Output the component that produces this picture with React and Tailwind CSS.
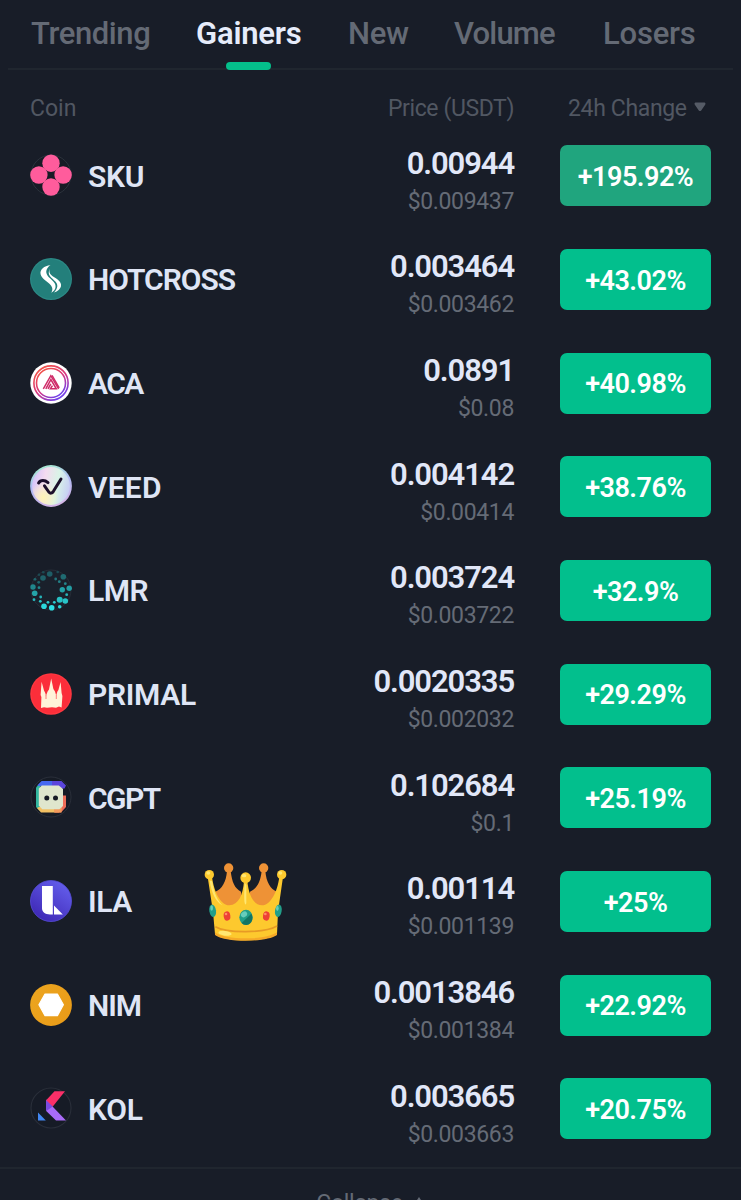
import React, { useState } from 'react';
import { clsx } from 'clsx';

const SkuIcon = () => (
  <svg viewBox="0 0 42 42" className="w-full h-full">
    <circle cx="21" cy="21" r="20" fill="#171b25" stroke="#2b323c" strokeWidth="1" />
    <g fill="#ff5c9c">
      <circle cx="21" cy="9.2" r="8.7" />
      <circle cx="8.9" cy="21" r="8.7" />
      <circle cx="33.1" cy="21" r="8.7" />
      <circle cx="21" cy="33" r="8.7" />
    </g>
  </svg>
);

const HotcrossIcon = () => (
  <svg viewBox="0 0 42 42" className="w-full h-full">
    <circle cx="21" cy="21" r="21" fill="#2b8a86" />
    <circle cx="21" cy="21" r="19.8" fill="#237f7b" />
    <path fill="#fff" d="M20.6 7C14 8 9.6 11.5 10.6 16.2C11.8 21.2 18 23.4 21 27.4C23.2 30.6 22.4 33 21 34.8C25.2 33 26.6 29 24.8 25.6C22.4 21.4 17.4 19.4 16.4 15C15.8 11.4 18.4 8.4 20.6 7Z" />
    <path fill="#fff" d="M20 10.8C17.4 16.4 23.4 18.4 27.6 21.4C33.4 26 31.8 31.4 24 34.6C28 30.4 28.2 26.8 25.6 23.8C22.4 20.2 16 17 20 10.8Z" />
  </svg>
);

const AcaIcon = () => (
  <svg viewBox="0 0 42 42" className="w-full h-full">
    <defs>
      <linearGradient id="acaRing" x1="0.2" y1="0.1" x2="0.8" y2="0.95">
        <stop offset="0" stopColor="#f0504b" />
        <stop offset="0.5" stopColor="#d8357f" />
        <stop offset="1" stopColor="#6a41f2" />
      </linearGradient>
    </defs>
    <circle cx="21" cy="21" r="20.7" fill="#fff" />
    <circle cx="21" cy="21" r="17.1" fill="none" stroke="url(#acaRing)" strokeWidth="1.6" />
    <circle cx="21" cy="21" r="14.5" fill="none" stroke="url(#acaRing)" strokeWidth="1.6" />
    <g fill="none" stroke="#cf2d69" strokeWidth="1.5">
      <path d="M13.3 26.8L20.8 13.7L28.6 26.8" />
      <path d="M15.8 26.8L20.9 17.6L26.3 26.8H20.4L22.4 23.6" />
      <path d="M18 26.8L20.8 21.8" />
      <path d="M22 13.4L29.2 25.8" />
    </g>
  </svg>
);

const VeedIcon = () => (
  <svg viewBox="0 0 42 42" className="w-full h-full">
    <defs>
      <linearGradient id="veedBase" x1="0" y1="0.4" x2="1" y2="0.6">
        <stop offset="0" stopColor="#d5c3fa" />
        <stop offset="0.3" stopColor="#f4dbf0" />
        <stop offset="0.65" stopColor="#d9f4e7" />
        <stop offset="1" stopColor="#c6ccf5" />
      </linearGradient>
      <radialGradient id="veedYellow" cx="0.3" cy="0.8" r="0.4">
        <stop offset="0" stopColor="#fff4b5" />
        <stop offset="1" stopColor="#fff4b5" stopOpacity="0" />
      </radialGradient>
      <linearGradient id="veedRim" x1="0.3" y1="0" x2="0.6" y2="1">
        <stop offset="0" stopColor="#a9eed1" />
        <stop offset="0.45" stopColor="#aeb9f2" />
        <stop offset="1" stopColor="#d8b6e8" />
      </linearGradient>
    </defs>
    <circle cx="21" cy="21" r="20.9" fill="url(#veedRim)" />
    <circle cx="21" cy="21" r="18.9" fill="url(#veedBase)" />
    <circle cx="21" cy="21" r="18.9" fill="url(#veedYellow)" />
    <g fill="none" stroke="#1c0f2b" strokeWidth="3" strokeLinecap="round" strokeLinejoin="round">
      <path d="M8.6 18C10.5 14.6 15 15 18 17.6" />
      <path d="M14.5 20.8L18.8 27Q21.2 29.6 23.4 26.3L31 14" />
    </g>
  </svg>
);

const lmrDots = [
  [19.7, 5, 2.8, '#1f5d66'], [13, 9, 2.8, '#1f6169'], [8.7, 13.3, 1.4, '#1d656c'],
  [25.7, 10, 1.4, '#23737a'], [33.3, 7.7, 2.8, '#1f6a71'], [29.3, 12.7, 1.4, '#238087'],
  [35.3, 14.7, 1.4, '#23868c'], [39.2, 19.3, 2.7, '#229da3'], [32.3, 20.7, 2.7, '#22a2a7'],
  [36.7, 25.7, 1.4, '#27b5b9'], [29.7, 30.8, 3, '#27c0c4'], [35.3, 32, 2.8, '#28c5c9'],
  [24.3, 33.3, 1.4, '#2accd0'], [18, 33.3, 1.4, '#2accd0'], [29.7, 37.7, 1.8, '#2cd4d8'],
  [21.7, 38.7, 2.8, '#2de0e4'], [14, 37.3, 2.8, '#2cd8dc'], [10.3, 32.3, 1.4, '#29c4c8'],
  [10.7, 28, 1.4, '#26b3b8'], [4, 30.7, 1.4, '#27b9bd'], [4.7, 24.3, 2.8, '#24a4a9'],
  [9, 18.7, 1.4, '#21868c'], [3, 18, 2.7, '#20868c'], [5, 10.3, 1.4, '#1e656c'],
  [13.3, 3.3, 1.3, '#1c4a53'], [9, 5.7, 1.3, '#1c4a53'], [27.7, 3, 1.3, '#1c4a53'],
];

const LmrIcon = () => (
  <svg viewBox="0 0 42 42" className="w-full h-full">
    <circle cx="21" cy="21" r="20" fill="#1a202b" stroke="#272d38" strokeWidth="1" />
    {lmrDots.map(([cx, cy, r, fill], index) => (
      <circle key={index} cx={cx} cy={cy} r={r} fill={fill} />
    ))}
  </svg>
);

const PrimalIcon = () => (
  <svg viewBox="0 0 42 42" className="w-full h-full">
    <circle cx="21" cy="21" r="20.8" fill="#ff3840" />
    <circle cx="21" cy="21" r="19.6" fill="#fb2e3a" />
    <path fill="#fff3d9" d="M11 35L11.4 24L10.6 22L11.6 8.8L14 17.4L15.2 19.8L16 22.8L17.6 18.5L19 16.6L21.2 5.4L23.4 16L25 18.4L26.2 22.6L27.4 18.4L28.4 17L30.6 9L31.6 20L32.4 23L31.6 34.4L29 33.6L26 34.8L22 34.2L17 34.8L14 34.2Z" />
    <path stroke="#fb2e3a" strokeWidth="0.6" d="M16 22V26M26.3 22V26" />
  </svg>
);

const CgptIcon = () => (
  <svg viewBox="0 0 42 42" className="w-full h-full">
    <circle cx="21" cy="21" r="20" fill="#161b25" stroke="#2a2f3a" strokeWidth="1" />
    <path fill="#33b8a0" d="M6 11.5L10.5 6.5V35.5L6 31Z" />
    <path fill="#4668f0" d="M7.2 9.5L11.6 5H24L26 10H9Z" />
    <path fill="#5b45dc" d="M22 5H31.5L36 9.5L34.5 12.5H30L27 10H22Z" />
    <path fill="#f2c063" d="M7 32L11 36.6H29V31H9Z" />
    <path fill="#ef6d58" d="M31 19.5H36V31L31 36.5H25V31Z" />
    <path fill="#f29a5b" d="M24 31H32L31.5 36.5H24Z" />
    <path fill="#dfe6cd" d="M11.8 9.4H28.8L33 13V30L29.5 33.2H12.3L8.8 29.8V12.6Z" />
    <circle cx="16.8" cy="22" r="2.5" fill="#171b24" />
    <circle cx="25.5" cy="22" r="2.5" fill="#171b24" />
  </svg>
);

const IlaIcon = () => (
  <svg viewBox="0 0 42 42" className="w-full h-full">
    <defs>
      <linearGradient id="ilaBg" x1="0.8" y1="0.1" x2="0.25" y2="0.9">
        <stop offset="0" stopColor="#625be9" />
        <stop offset="1" stopColor="#402bb8" />
      </linearGradient>
    </defs>
    <circle cx="21" cy="21" r="20.5" fill="url(#ilaBg)" stroke="#574edb" strokeWidth="0.8" />
    <path fill="#fff" d="M12 6H22.8V34.4H20C15 34.4 12 32 12 28Z" />
    <path fill="#fff" d="M24 25.4L32.8 34.4H24Z" />
  </svg>
);

const NimIcon = () => (
  <svg viewBox="0 0 42 42" className="w-full h-full">
    <defs>
      <linearGradient id="nimBg" x1="0" y1="0.2" x2="1" y2="0.8">
        <stop offset="0" stopColor="#eca51f" />
        <stop offset="1" stopColor="#e99b18" />
      </linearGradient>
    </defs>
    <circle cx="21" cy="21" r="20.9" fill="url(#nimBg)" />
    <path fill="#fff" stroke="#fff" strokeWidth="1.2" strokeLinejoin="round" d="M8.9 20.8L15 10H27.4L33.4 20.8L27.4 31.6H15Z" />
  </svg>
);

const KolIcon = () => (
  <svg viewBox="0 0 42 42" className="w-full h-full">
    <circle cx="21" cy="21" r="20" fill="#161b26" stroke="#2a2f3a" strokeWidth="1.1" />
    <path fill="#a96bf8" d="M16.2 12.5V24L26 33.5H36L23.5 20.5Z" />
    <path fill="#7a4ae0" d="M16.2 12.5V24L22.8 19.5Z" />
    <path fill="#fb2f68" d="M24.5 4.3H35L22.8 19.6L16.2 13.2Z" />
    <path fill="#4287f2" d="M8 25.6V33.5H15.8Z" />
  </svg>
);

const Crown = () => (
  <svg viewBox="0 0 330 285" className="w-[110px] h-[95px]">
    <g fill="#ee9236">
      <circle cx="116" cy="39" r="14" />
      <circle cx="221" cy="39" r="14" />
      <path d="M111 48H122C126 82 134 100 153 110L160 155H90L76 110C96 102 108 82 111 48Z" />
      <path d="M226 48H215C211 82 201 100 180 110L174 155H244L261 110C241 102 229 82 226 48Z" />
    </g>
    <g fill="#fdc92e">
      <circle cx="58" cy="59" r="14" />
      <circle cx="275" cy="59" r="14" />
      <circle cx="167" cy="68" r="16" />
      <path d="M53 66H66C72 112 92 150 118 151C146 149 159 120 162 78H172C176 120 190 149 216 151C242 150 262 112 268 66H279L264 170L261 238C230 262 103 262 75 238L69 170Z" />
    </g>
    <path fill="none" stroke="#e79a25" strokeWidth="5" d="M76 215C110 235 224 235 261 213" />
    <path fill="#f5a928" d="M75 232C103 256 230 256 261 232V240C230 263 103 263 75 240Z" />
    <g fill="#ffe772">
      <ellipse cx="55" cy="54" rx="6" ry="5" />
      <ellipse cx="162" cy="62" rx="7" ry="5" />
      <ellipse cx="271" cy="54" rx="6" ry="5" />
      <ellipse cx="105" cy="235" rx="20" ry="7" transform="rotate(8 105 235)" />
      <path d="M59 77L66 78C73 116 83 139 98 151C77 141 64 112 59 77Z" />
      <path d="M164 84L169 90V145C165 155 160 145 164 84Z" />
    </g>
    <g fill="#229e89">
      <ellipse cx="68" cy="167" rx="10" ry="19" transform="rotate(-8 68 167)" />
      <ellipse cx="265" cy="167" rx="10" ry="19" transform="rotate(8 265 167)" />
      <ellipse cx="168" cy="187" rx="20" ry="23" />
    </g>
    <g fill="#66cdbb">
      <ellipse cx="65" cy="159" rx="4" ry="8" />
      <ellipse cx="262" cy="160" rx="4" ry="8" />
      <ellipse cx="162" cy="178" rx="10" ry="8" transform="rotate(-35 162 178)" />
    </g>
    <path fill="#137463" d="M155 204L184 176C191 188 187 208 169 210C163 210 158 208 155 204Z" />
    <ellipse cx="111" cy="183" rx="10" ry="14" fill="#ed4035" transform="rotate(-8 111 183)" />
    <ellipse cx="229" cy="183" rx="10" ry="14" fill="#ed4035" transform="rotate(8 229 183)" />
    <circle cx="108" cy="177" r="4" fill="#ff8b69" />
    <circle cx="226" cy="177" r="4" fill="#ff8b69" />
  </svg>
);

const tabs = [
  { name: 'Trending', className: 'w-[165px] tracking-[-0.4px]' },
  { name: 'Gainers', className: 'w-[152px] tracking-[-0.2px]' },
  { name: 'New', className: 'w-[106px] tracking-[-0.3px]' },
  { name: 'Volume', className: 'w-[149px] tracking-[-0.8px]' },
  { name: 'Losers', className: 'tracking-[-0.2px]' },
];

const coins = [
  { symbol: 'SKU', price: '0.00944', usd: '$0.009437', change: '+195.92%', icon: SkuIcon, tracking: 'tracking-[-0.3px]', pressed: true },
  { symbol: 'HOTCROSS', price: '0.003464', usd: '$0.003462', change: '+43.02%', icon: HotcrossIcon, tracking: 'tracking-[-1px]' },
  { symbol: 'ACA', price: '0.0891', usd: '$0.08', change: '+40.98%', icon: AcaIcon, tracking: 'tracking-[-1.6px]' },
  { symbol: 'VEED', price: '0.004142', usd: '$0.00414', change: '+38.76%', icon: VeedIcon, tracking: 'tracking-[0.2px]' },
  { symbol: 'LMR', price: '0.003724', usd: '$0.003722', change: '+32.9%', icon: LmrIcon, tracking: 'tracking-[-0.5px]' },
  { symbol: 'PRIMAL', price: '0.0020335', usd: '$0.002032', change: '+29.29%', icon: PrimalIcon, tracking: 'tracking-[-0.3px]' },
  { symbol: 'CGPT', price: '0.102684', usd: '$0.1', change: '+25.19%', icon: CgptIcon, tracking: 'tracking-[-1.5px]' },
  { symbol: 'ILA', price: '0.00114', usd: '$0.001139', change: '+25%', icon: IlaIcon, tracking: 'tracking-[-0.4px]', crowned: true },
  { symbol: 'NIM', price: '0.0013846', usd: '$0.001384', change: '+22.92%', icon: NimIcon, tracking: 'tracking-[-1.1px]' },
  { symbol: 'KOL', price: '0.003665', usd: '$0.003663', change: '+20.75%', icon: KolIcon, tracking: 'tracking-[-0.2px]' },
];

const CoinRow = ({ coin }) => {
  const Icon = coin.icon;

  return (
    <div className="relative h-[103.67px] px-[30px] grid grid-cols-[1fr_auto_151px] items-center">
      <div className="flex items-center gap-4 pb-[1px]">
        <div className="w-[42px] h-[42px] shrink-0">
          <Icon />
        </div>
        <span className={clsx('text-[30px] leading-[36px] font-semibold text-[#dfe5f5] pt-[3px]', coin.tracking)}>
          {coin.symbol}
        </span>
      </div>
      <div className="text-right mr-[46px] pt-[14px]">
        <div className="text-[31px] leading-[38px] font-semibold tracking-[-1.1px] text-[#e1e7f8]">{coin.price}</div>
        <div className="text-[23px] leading-[38px] tracking-[-0.35px] text-[#656b76]">{coin.usd}</div>
      </div>
      <div
        className={clsx(
          'h-[61px] rounded-[7px] flex items-center justify-center pt-[3px] text-[27px] font-semibold tracking-[-0.5px] text-white',
          coin.pressed ? 'bg-[#20a57e]' : 'bg-[#02bf8d]'
        )}
      >
        {coin.change}
      </div>
      {coin.crowned && (
        <div className="absolute left-[190px] top-[5px]">
          <Crown />
        </div>
      )}
    </div>
  );
};

export default function App() {
  const [activeTab, setActiveTab] = useState('Gainers');

  return (
    <div className="w-[741px] h-[1200px] overflow-hidden bg-[#181d28] font-['Roboto',sans-serif]">
      <nav className="h-[70px] mx-2 pl-[23px] flex border-b-2 border-[#20262f]">
        {tabs.map((tab) => (
          <button
            key={tab.name}
            onClick={() => setActiveTab(tab.name)}
            className={clsx(
              'text-left text-[31px] leading-[68px] h-[70px] shrink-0',
              activeTab === tab.name ? 'font-semibold text-[#e6ecfb]' : 'font-medium text-[#646a75]',
              tab.className
            )}
          >
            <span className="relative inline-block h-[70px]">
              {tab.name}
              {activeTab === tab.name && (
                <span className="absolute left-[30px] bottom-0 w-[45px] h-2 rounded-full bg-[#04bf8b]" />
              )}
            </span>
          </button>
        ))}
      </nav>

      <div className="h-[54px] px-[30px] pt-[23px] grid grid-cols-[1fr_auto_151px] text-[23px] leading-[31px] text-[#515762]">
        <span>Coin</span>
        <span className="mr-[46px] tracking-[-0.4px]">Price (USDT)</span>
        <span className="flex items-center pl-[8px] gap-[7px]">
          <span className="tracking-[-0.35px] whitespace-nowrap">24h Change</span>
          <svg viewBox="0 0 12 10" className="w-3 h-[10px] shrink-0 mb-1">
            <path d="M1.4 0.5H10.6Q12.2 1.4 11 3L7.2 8.4Q6 9.6 4.8 8.4L1 3Q-0.2 1.4 1.4 0.5Z" fill="#555b66" />
          </svg>
        </span>
      </div>

      {coins.map((coin) => (
        <CoinRow key={coin.symbol} coin={coin} />
      ))}

      <div className="mt-[6px] h-[80px] border-t-2 border-[#20262f] flex justify-center items-start pt-[19px] gap-[10px] text-[23px] leading-[31px] text-[#646a75]">
        <span className="tracking-[-0.3px]">Collapse</span>
        <svg viewBox="0 0 12 10" className="w-3 h-[10px] mt-[8px]">
          <path d="M1 8.5L6 1L11 8.5Z" fill="#646a75" />
        </svg>
      </div>
    </div>
  );
}
